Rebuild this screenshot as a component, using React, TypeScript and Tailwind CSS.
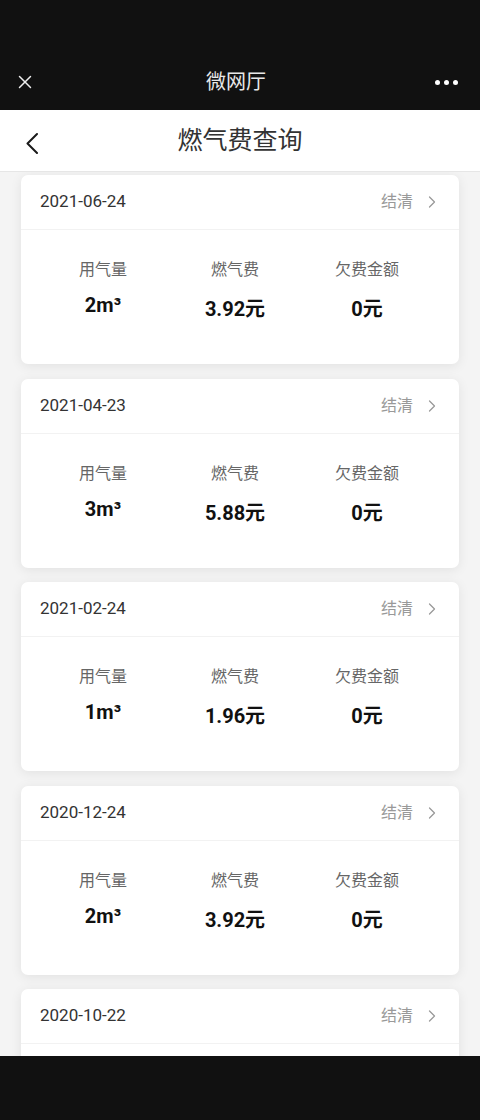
import { X, ChevronRight } from "lucide-react";

const records = [
  { date: "2021-06-24", gas: "2", fee: "3.92元", owe: "0元" },
  { date: "2021-04-23", gas: "3", fee: "5.88元", owe: "0元" },
  { date: "2021-02-24", gas: "1", fee: "1.96元", owe: "0元" },
  { date: "2020-12-24", gas: "2", fee: "3.92元", owe: "0元" },
  { date: "2020-10-22", gas: "2", fee: "3.92元", owe: "0元" },
];

const font = "font-['Roboto','Noto_Sans_CJK_SC',sans-serif]";

function RecordCard({ r }: { r: (typeof records)[number] }) {
  return (
    <div className="shrink-0 rounded-[7px] bg-white shadow-[0_2px_12px_rgba(0,0,0,0.08)]">
      <div className="flex h-[55px] items-center justify-between border-b border-[#f2f2f2] pl-[19px] pr-[17px]">
        <span className="text-[17px] text-[#333]">{r.date}</span>
        <span className="flex items-center gap-[9px] text-[16px] text-[#999]">
          结清
          <ChevronRight className="h-[20px] w-[20px]" strokeWidth={1.5} />
        </span>
      </div>
      <div className="grid h-[134px] grid-cols-3 pl-[16px] pr-[26px] pt-[28px]">
        <div className="flex flex-col items-center">
          <span className="text-[16px] leading-[24px] text-[#666]">用气量</span>
          <span className="mt-[10px] text-[20px] font-bold leading-[26px] text-[#111]">
            {r.gas}m³
          </span>
        </div>
        <div className="flex flex-col items-center">
          <span className="text-[16px] leading-[24px] text-[#666]">燃气费</span>
          <span className="mt-[14px] text-[20px] font-bold leading-[26px] text-[#111]">
            {r.fee}
          </span>
        </div>
        <div className="flex flex-col items-center">
          <span className="text-[16px] leading-[24px] text-[#666]">欠费金额</span>
          <span className="mt-[14px] text-[20px] font-bold leading-[26px] text-[#111]">
            {r.owe}
          </span>
        </div>
      </div>
    </div>
  );
}

export default function App() {
  return (
    <div className={`flex h-[1120px] w-[480px] flex-col overflow-hidden ${font}`}>
      {/* WeChat top bar */}
      <div className="flex h-[110px] shrink-0 items-end bg-[#111111]">
        <div className="grid h-[56px] w-full grid-cols-[60px_1fr_60px] items-center pl-[14px] pr-[22px]">
          <X className="h-[22px] w-[22px] text-[#eee]" strokeWidth={1.6} />
          <span className="text-center text-[20px] text-[#e8e8e8]">微网厅</span>
          <div className="flex justify-end gap-[4px]">
            <span className="h-[5px] w-[5px] rounded-full bg-white" />
            <span className="h-[5px] w-[5px] rounded-full bg-white" />
            <span className="h-[5px] w-[5px] rounded-full bg-white" />
          </div>
        </div>
      </div>

      {/* Page header */}
      <div className="relative flex h-[62px] shrink-0 items-center justify-center border-b border-[#e6e6e6] bg-white">
        <svg
          className="absolute left-[25px] top-[22px]"
          width="14"
          height="22"
          viewBox="0 0 14 22"
          fill="none"
          stroke="#1a1a1a"
          strokeWidth="2"
          strokeLinecap="round"
          strokeLinejoin="round"
        >
          <polyline points="12,2 2.5,11.5 12,21" />
        </svg>
        <span className="text-[25px] text-[#333]">燃气费查询</span>
      </div>

      {/* List */}
      <div className="flex flex-1 flex-col gap-[14.5px] overflow-hidden bg-[#f4f4f4] px-[21px] pt-[3px]">
        {records.map((r) => (
          <RecordCard key={r.date} r={r} />
        ))}
      </div>

      {/* Bottom bar */}
      <div className="h-[64px] shrink-0 bg-[#111111]" />
    </div>
  );
}
